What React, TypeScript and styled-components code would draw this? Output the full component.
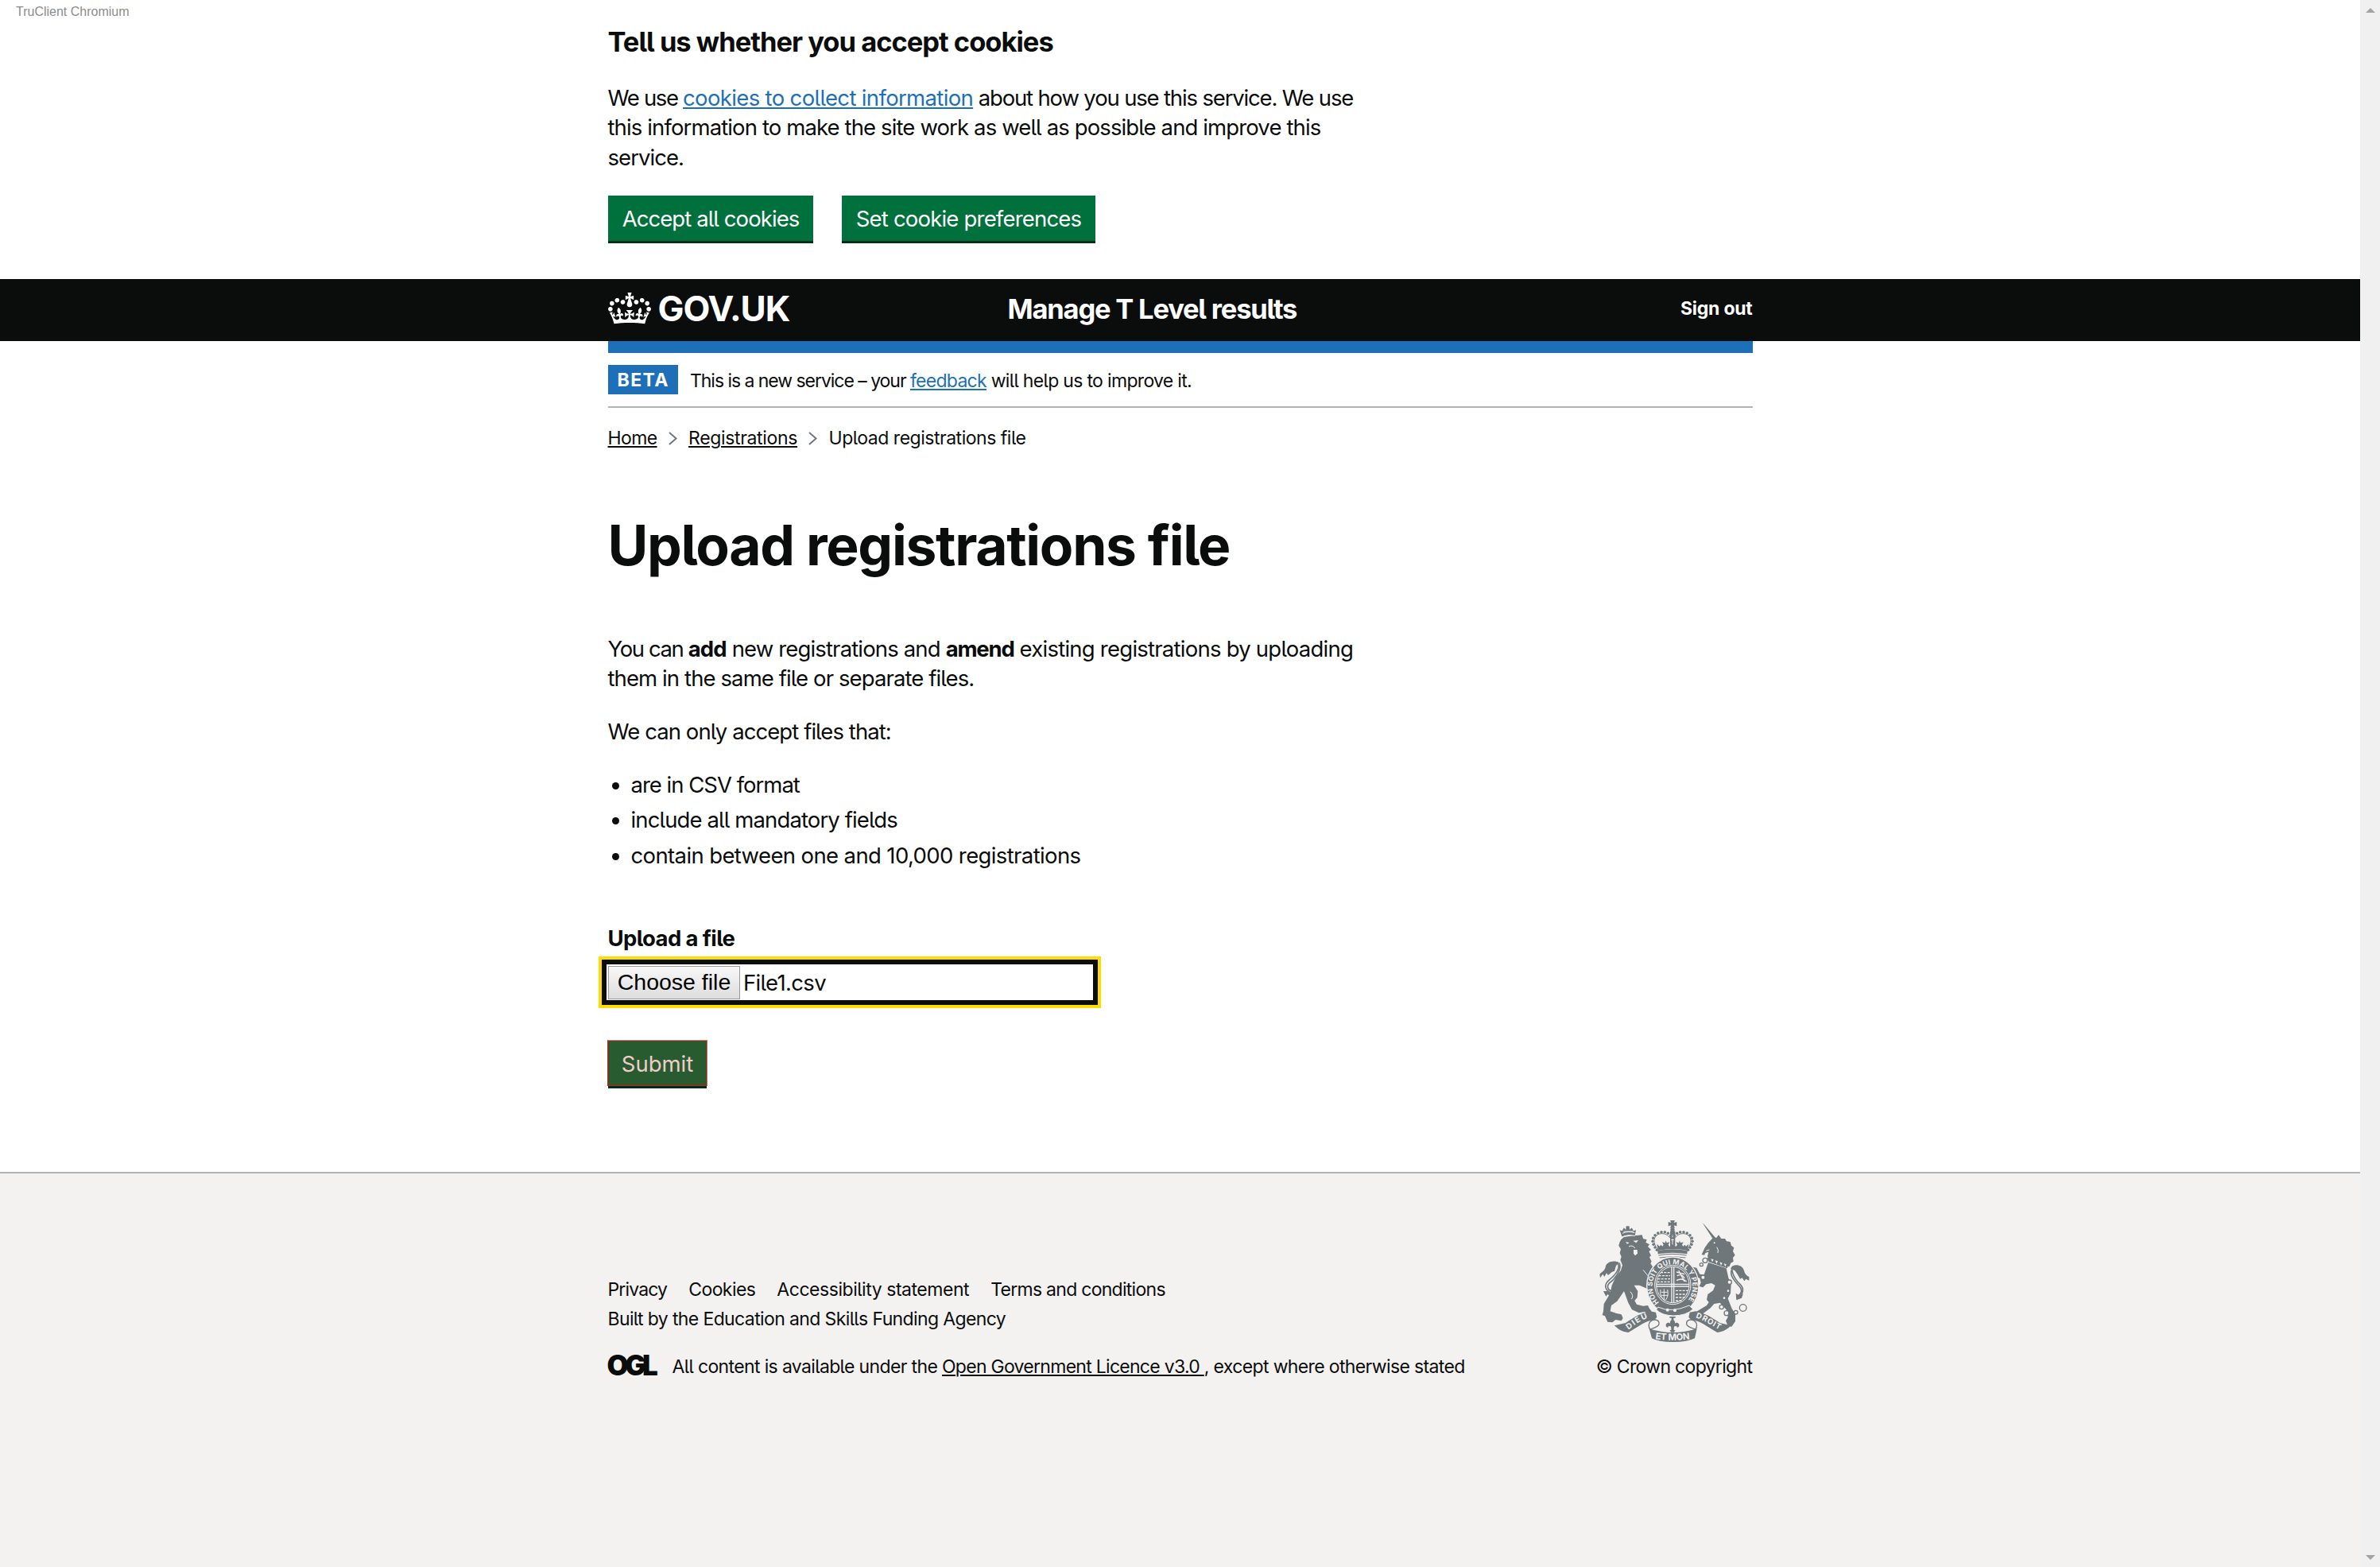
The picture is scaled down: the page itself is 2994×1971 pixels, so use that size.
import React from 'react';
import styled, { createGlobalStyle } from 'styled-components';

const ink = '#0b0c0c';
const blue = '#1d70b8';
const crestGrey = '#6f777b';
const footerGrey = '#f3f2f1';

const GlobalStyle = createGlobalStyle`
  * { box-sizing: border-box; }
  body {
    margin: 0;
    background: #fff;
    color: ${ink};
    font-family: Inter, "Liberation Sans", sans-serif;
    font-feature-settings: "cv05";
  }
  h1, h2, p, ul { margin: 0; padding: 0; font-weight: 400; }
  ul { list-style: none; }
`;

const Screen = styled.div`
  display: flex;
  width: 100%;
  height: 1971px;
  overflow: hidden;
`;

const Page = styled.div`
  flex: 1;
  display: flex;
  flex-direction: column;
  position: relative;
`;

const Scrollbar = styled.div`
  width: 25px;
  display: flex;
  flex-direction: column;
  justify-content: space-between;
  align-items: center;
  padding: 10px 0 9px;
  background: #f0f0f0;
`;

const BrowserLabel = styled.div`
  position: absolute;
  left: 20px;
  top: 6px;
  color: #8c8c8c;
  font: 16px/18px "Liberation Sans", Arial, sans-serif;
`;

const Container = styled.div`
  width: 1440px;
  margin: 0 auto;
`;

const Track = styled.span<{ $ls: number; $bold?: boolean }>`
  letter-spacing: ${(p) => p.$ls}px;
  font-weight: ${(p) => (p.$bold ? 700 : 'inherit')};
  white-space: pre;
`;

const Link = styled.a<{ $ls: number; $tone?: 'blue' | 'ink' }>`
  letter-spacing: ${(p) => p.$ls}px;
  color: ${(p) => (p.$tone === 'blue' ? blue : ink)};
  text-decoration: underline;
  text-decoration-thickness: 2px;
  text-underline-offset: 2px;
  white-space: pre;
`;

const Paragraph = styled.p`
  font-size: 27.5px;
  line-height: 37.5px;
  & + & { margin-top: 29px; }
`;

const CookieBanner = styled(Container)`
  padding: 30px 0 45px;
`;

const BannerTitle = styled.h2`
  margin-bottom: 29.5px;
  font-size: 34.5px;
  line-height: 45px;
  font-weight: 700;
  letter-spacing: -1px;
`;

const ButtonRow = styled.div`
  display: flex;
  gap: 36px;
  margin-top: 29px;
`;

const GreenButton = styled.button<{ $width: number; $ls: number }>`
  width: ${(p) => p.$width}px;
  height: 57px;
  margin-bottom: 3px;
  padding: 1px 0 0 1px;
  border: 0;
  background: #00703c;
  box-shadow: 0 3px 0 #002d18;
  color: #fff;
  font: inherit;
  font-feature-settings: inherit;
  font-size: 27.5px;
  letter-spacing: ${(p) => p.$ls}px;
`;

const Header = styled.header`
  background: ${ink};
  color: #fff;
  font-weight: 700;
`;

const HeaderRow = styled(Container)`
  display: flex;
  align-items: center;
  height: 78px;
  padding-bottom: 4px;
`;

const Logo = styled.div`
  display: flex;
  align-items: center;
  gap: 9px;
  width: 503px;
  font-size: 44px;
  letter-spacing: -1.1px;
`;

const ServiceName = styled.div`
  flex: 1;
  font-size: 34.5px;
  letter-spacing: -1.2px;
`;

const SignOut = styled.div`
  font-size: 23px;
  letter-spacing: -0.25px;
`;

const BlueBar = styled.div`
  height: 15px;
  background: ${blue};
`;

const PhaseBanner = styled.div`
  display: flex;
  align-items: center;
  gap: 15.5px;
  padding: 15px 0;
  border-bottom: 2px solid #b1b4b6;
  font-size: 23px;
`;

const Tag = styled.strong`
  width: 88px;
  height: 37px;
  padding-left: 12px;
  background: ${blue};
  color: #fff;
  font-weight: 700;
  line-height: 38px;
  letter-spacing: 1.45px;
`;

const PhaseText = styled.div`
  padding-top: 2px;
  line-height: 30px;
`;

const Breadcrumbs = styled.nav`
  display: flex;
  align-items: center;
  gap: 14.25px;
  margin-top: 23px;
  font-size: 23px;
  line-height: 30px;
`;

const Title = styled.h1`
  margin: 82.5px 0 74.25px;
  font-size: 69.5px;
  line-height: 75px;
  font-weight: 700;
  letter-spacing: -1.32px;
`;

const BulletList = styled.ul`
  display: flex;
  flex-direction: column;
  gap: 7px;
  margin-top: 29.5px;
`;

const Bullet = styled.li<{ $ls: number }>`
  display: flex;
  gap: 15px;
  padding-left: 5px;
  font-size: 27.5px;
  line-height: 37.5px;
  letter-spacing: ${(p) => p.$ls}px;
  &::before {
    content: '';
    width: 9px;
    height: 9px;
    margin-top: 15px;
    border-radius: 50%;
    background: ${ink};
  }
`;

const FieldLabel = styled.label`
  display: block;
  margin-top: 67px;
  font-size: 27.5px;
  line-height: 37.5px;
  font-weight: 700;
  letter-spacing: -0.62px;
`;

const FileField = styled.div`
  display: flex;
  align-items: center;
  gap: 4.5px;
  width: 624px;
  height: 57px;
  margin: 7.25px 0 44px -8px;
  padding: 2px;
  border: 6px solid ${ink};
  box-shadow: 0 0 0 4px #fd0;
  font-size: 27.5px;
  letter-spacing: -0.66px;
`;

const ChooseFile = styled.button`
  width: 166px;
  height: 42px;
  padding: 0 0 1px 1px;
  border: 1px solid #999;
  background: linear-gradient(#f8f8f8, #ddd);
  color: #000;
  font: 28.5px/39px "Liberation Sans", Arial, sans-serif;
`;

const SubmitButton = styled.button`
  display: block;
  width: 126px;
  height: 58px;
  margin-left: -1px;
  padding: 2px 0 0 1px;
  border: 1px solid;
  border-color: #ff6b6b #f05050 #e01212 #e01212;
  background: #285c30;
  box-shadow: 0 4px 0 -1px #002d18;
  color: #f2cccb;
  font: inherit;
  font-feature-settings: inherit;
  font-size: 27.5px;
  letter-spacing: 0;
`;

const Footer = styled.footer`
  flex: 1;
  margin-top: 108px;
  border-top: 2px solid #b1b4b6;
  background: ${footerGrey};
  font-size: 23px;
  line-height: 30px;
`;

const FooterRow = styled(Container)`
  display: flex;
  justify-content: space-between;
  align-items: flex-end;
  padding-top: 59px;
`;

const FooterLinks = styled.div`
  display: flex;
  gap: 27px;
`;

const BuiltBy = styled.p`
  margin: 7px 0 30px;
  letter-spacing: -0.62px;
`;

const Licence = styled.div`
  display: flex;
`;

const OglMark = styled.span`
  width: 82px;
  margin-left: -1px;
  font-size: 35px;
  font-weight: 900;
  letter-spacing: -4.5px;
  line-height: 27px;
`;

const CrownCopyright = styled.div`
  display: flex;
  flex-direction: column;
  align-items: center;
  gap: 16px;
  width: 197px;
  letter-spacing: -0.68px;
  white-space: nowrap;
`;

const Drawing = styled.svg`
  display: block;
  flex: none;
  overflow: visible;
`;

const Crown = () => (
  <Drawing width="54" height="39.7" viewBox="0 0 132 97">
    <path
      fill="#fff"
      fillRule="evenodd"
      d="M25 30.2c3.5 1.5 7.7-.2 9.1-3.7 1.5-3.6-.2-7.8-3.9-9.2-3.6-1.4-7.6.3-9.1 3.9-1.4 3.5.3 7.5 3.9 9zM9 39.5c3.6 1.5 7.8-.2 9.2-3.7 1.5-3.6-.2-7.8-3.9-9.1-3.6-1.5-7.6.2-9.1 3.8-1.4 3.5.3 7.5 3.8 9zM4.4 57.2c3.5 1.5 7.7-.2 9.1-3.8 1.5-3.6-.2-7.7-3.9-9.1-3.5-1.5-7.6.3-9.1 3.8-1.4 3.5.3 7.6 3.9 9.1zm38.3-21.4c3.5 1.5 7.7-.2 9.1-3.8 1.5-3.6-.2-7.7-3.9-9.1-3.6-1.5-7.6.3-9.1 3.8-1.3 3.6.4 7.7 3.9 9.1zm64.4-5.6c-3.6 1.5-7.8-.2-9.1-3.7-1.5-3.6.2-7.8 3.8-9.2 3.6-1.4 7.7.3 9.2 3.9 1.3 3.5-.4 7.5-3.9 9zm15.9 9.3c-3.6 1.5-7.7-.2-9.1-3.7-1.5-3.6.2-7.8 3.7-9.1 3.6-1.5 7.7.2 9.2 3.8 1.5 3.5-.3 7.5-3.8 9zm4.7 17.7c-3.6 1.5-7.8-.2-9.2-3.8-1.5-3.6.2-7.7 3.9-9.1 3.6-1.5 7.7.3 9.2 3.8 1.3 3.5-.4 7.6-3.9 9.1zM89.3 35.8c-3.6 1.5-7.8-.2-9.2-3.8-1.4-3.6.2-7.7 3.9-9.1 3.6-1.5 7.7.3 9.2 3.8 1.4 3.6-.3 7.7-3.9 9.1zM69.7 17.7l8.9 4.7V9.3l-8.9 2.8c-.2-.3-.5-.6-.9-.9L72.4 0H59.6l3.5 11.2c-.3.3-.6.5-.9.9l-8.8-2.8v13.1l8.8-4.7c.3.3.6.7.9.9l-5 15.4v.1c-.2.8-.4 1.6-.4 2.4 0 4.1 3.1 7.5 7 8.1h.2c.3 0 .7.1 1 .1.4 0 .7 0 1-.1h.2c4-.6 7.1-4.1 7.1-8.1 0-.8-.1-1.7-.4-2.4V34l-5.1-15.4c.4-.2.7-.6 1-.9zM66 92.8c16.9 0 32.8 1.1 47.1 3.2 4-16.9 8.9-26.7 14-33.5l-9.6-3.4c1 4.9 1.1 7.2 0 10.2-1.5-1.4-3-4.3-4.2-8.7L108.6 76c2.8-2 5-3.2 7.5-3.3-4.4 9.4-10 11.9-13.6 11.2-4.3-.8-6.3-4.6-5.6-7.9 1-4.7 5.7-5.9 8-.5 4.3-8.7-3-11.4-7.6-8.8 7.1-7.2 7.9-13.5 2.1-21.1-8 6.1-8.1 12.3-4.5 20.8-4.7-5.4-12.1-2.5-9.5 6.2 3.4-5.2 7.9-2 7.2 3.1-.6 4.3-6.4 7.8-13.5 7.2-10.3-.9-10.9-8-11.2-13.8 2.5-.5 7.1 1.8 11 7.3L80.2 60c-4.1 4.4-8 5.3-12.3 5.4 1.4-4.4 8-11.6 8-11.6H55.5s6.4 7.2 7.9 11.6c-4.2-.1-8-1-12.3-5.4l1.4 16.4c3.9-5.5 8.5-7.7 10.9-7.3-.3 5.8-.9 12.8-11.1 13.8-7.2.6-12.9-2.9-13.5-7.2-.7-5 3.8-8.3 7.1-3.1 2.7-8.7-4.6-11.6-9.4-6.2 3.7-8.5 3.6-14.7-4.6-20.8-5.8 7.6-5 13.9 2.2 21.1-4.7-2.6-11.9.1-7.7 8.8 2.3-5.5 7.1-4.2 8.1.5.7 3.3-1.3 7.1-5.7 7.9-3.5.7-9-1.8-13.5-11.2 2.5.1 4.7 1.3 7.5 3.3l-4.7-15.4c-1.2 4.4-2.7 7.2-4.3 8.7-1.1-3-.9-5.3 0-10.2l-9.5 3.4c5 6.9 9.9 16.7 14 33.5 14.8-2.1 30.8-3.2 47.7-3.2z"
    />
  </Drawing>
);

const Chevron = () => (
  <Drawing width="11" height="17" viewBox="0 0 11 17">
    <path d="M1 1l8.5 7.5L1 16" fill="none" stroke="#6f777b" strokeWidth="2" />
  </Drawing>
);

const Arrow = ({ down }: { down?: boolean }) => (
  <Drawing width="12" height="6" viewBox="0 0 12 6">
    <path d={down ? 'M0 0h12L6 6z' : 'M0 6h12L6 0z'} fill="#a3a3a3" />
  </Drawing>
);

const beads = [
  [366, 133], [356, 124], [344, 119], [331, 119], [318, 123], [307, 131],
  [300, 142], [298, 154], [301, 166], [307, 177], [314, 187],
];

const Crest = () => (
  <Drawing width="188" height="153" viewBox="97 75 564 459">
    <defs>
      <path id="garter" d="M322 385 A76 83 0 1 1 432 376" />
      <path id="ribbonLeft" d="M206 488 C232 470 250 452 284 442" />
      <path id="ribbonRight" d="M460 442 C492 450 520 474 556 490" />
      <path id="ribbonMid" d="M304 522 Q374 532 444 522" />
    </defs>
    {/* crown */}
    <path fill={crestGrey} d="M364 75h18l-4 9 11-3v16l-11-3 4 10h-18l4-10-11 3v-16l11 3z" />
    <circle cx="373" cy="111" r="8" fill={crestGrey} />
    <rect x="364" y="116" width="19" height="66" fill={crestGrey} />
    <path stroke={footerGrey} strokeWidth="3" fill="none" d="M373 130v9M373 145v22M368 148h10" />
    {beads.map(([x, y]) => (
      <g key={x} fill={crestGrey}>
        <circle cx={x} cy={y} r="5.2" />
        <circle cx={746 - x} cy={y} r="5.2" />
      </g>
    ))}
    <path fill="none" stroke={crestGrey} strokeWidth="3" d="M364 142c-8-12-20-18-34-17-18 2-28 16-26 32 2 12 8 22 14 30M382 142c8-12 20-18 34-17 18 2 28 16 26 32-2 12-8 22-14 30" />
    <path fill={crestGrey} d="M318 189l-4-25 10 9 5-6 6 6 4-6-5-10 11 3 3-9 3 9 11-3-5 10 6 8 6-8h10l6 8 6-8-5-10 11 3 3-9 3 9 11-3-5 10 4 6 6-6 5 6 10-9-4 25q-55-12-110 0z" />
    <path fill={crestGrey} d="M317 190q56-13 112 0l-1 12q-55-10-110 0z" />
    <path fill="none" stroke={crestGrey} strokeWidth="3" d="M320 207q53-10 106 0M324 216q50-9 98 0" />
    {/* lion */}
    <path fill={crestGrey} d="M180 146l10-8 24-4 44-4 4 14 14 4-4 10 14 8-6 8 12 12-8 6 8 16-6 6 8 16-4 8 8 12-12 20-8 30 12 6 12 40-8 14-14-26-32-14-20 0 14 22-2 24-10 12 8 14 24 6 18-2 6 12 8 10-8 8-20-6-20 4-26-12-14-26-8-22-8-22-8 12-18 26-22 16-4 22 24 8 18 4 6 14-6 10-22-4-12 10-18-2-10-22-10-4 4-14 2-28 24-40 6-30 14-30 20-26 6-20-8-20 4-12-6-14 4-14-8-14 4-14z" />
    <path fill={crestGrey} d="M182 136l-8-24 9 3 6-12 8 7 1-13h12l1 13 8-7 7 12 9-4-4 24q-25-8-49 1z" />
    <path fill="none" stroke={footerGrey} strokeWidth="3" d="M184 124q22-10 46-2M190 134q20-6 42-1M188 117h38" />
    <path fill={footerGrey} d="M196 156l14 3-8 5zM224 152l20-2-8 10zM226 186h14l1 14-9 8-6-8z" />
    <path fill="none" stroke={footerGrey} strokeWidth="3" d="M208 174q12-8 24 6M262 262l30 36M214 344q14 16 4 28" />
    <path fill="none" stroke={crestGrey} strokeWidth="5" d="M162 232c18 14 2 44-26 66-26 20-16 44 6 50M172 236c12 24-18 62-38 76-12 14-2 30 10 28l26-22" />
    <path fill={crestGrey} d="M172 234c-22-10-50-2-52 18-4 14-12 16-22 26l2 14 10-14 6 10 8-14 6 8 14-12 10-4 6-20zM112 342l10 20 6-8 10 8 4-14-14-6z" />
    {/* unicorn */}
    <path fill={crestGrey} d="M486 84l8 8 44 52-8 8z" />
    <path fill={crestGrey} d="M495 178l14-20 16-16 14-2 8-10 10 14 14 0 6 10 14 2 4 14 10 8-4 14 8 14-8 10 2 14-10 6-6 14-10-2-60-22-12-16 4-16-12 4-4 8-10-2z" />
    <circle cx="531" cy="160" r="3" fill={footerGrey} />
    <path fill="none" stroke={footerGrey} strokeWidth="3" d="M500 190l12-4M540 176q8 10 4 22" />
    <path fill={crestGrey} d="M512 206l10 18 60 22-2 10-70-24-6-14z" />
    <path fill={footerGrey} d="M518 220l10 3-5 9zM534 226l10 3-5 10zM551 232l10 4-5 9zM567 238l9 3-4 9z" />
    <path fill={crestGrey} d="M508 234l68 22 8 36 10 24-2 34-10 20 14 36 14 24 0 26-14 20-14-2-8-20 8-14-6-28-24-26-22 4-14 16-32 24-26 6-8-4 16-14 36-22 8-12-8-10 4-20 20-14 8-20-14-8-20 4-12 12-14-4 6-14-4-16-26-14-2-14-12 6-6-10 14-12 20 4 12 24 16 2z" />
    <g fill={footerGrey} stroke={crestGrey} strokeWidth="4">
      <circle cx="588" cy="308" r="8" />
      <circle cx="583" cy="341" r="6" />
      <circle cx="568" cy="368" r="6" />
      <circle cx="558" cy="402" r="8" />
      <circle cx="577" cy="425" r="9" />
      <circle cx="612" cy="422" r="7" />
      <circle cx="639" cy="405" r="13" />
      <circle cx="496" cy="226" r="9" />
      <circle cx="482" cy="242" r="6" />
      <circle cx="488" cy="290" r="8" />
    </g>
    <path fill="none" stroke={crestGrey} strokeWidth="5" d="M596 262c-8 20 10 40 26 58 16 16 14 30-4 42M606 248c-20 4-2 46 22 68 18 18 12 40-14 50" />
    <path fill={crestGrey} d="M592 258c8-22 44-16 50 4 4 16 10 22 20 26v14l-12-6-6 8-8-12-8 4-10-18-10-14zM612 350l16 10 12-10-6 18-20 8z" />
    {/* garter and shield */}
    <ellipse cx="374" cy="322" rx="98" ry="109" fill={crestGrey} stroke={footerGrey} strokeWidth="4" />
    <ellipse cx="374" cy="318" rx="68" ry="74" fill="none" stroke={footerGrey} strokeWidth="3" />
    <ellipse cx="374" cy="318" rx="62" ry="68" fill="none" stroke={footerGrey} strokeWidth="3" />
    <path stroke={footerGrey} strokeWidth="4" fill="none" d="M370 252v132M378 252v132M312 316h124M312 324h124" />
    <path stroke={footerGrey} strokeWidth="4" fill="none" strokeDasharray="9 4" d="M328 272h36M321 284h43M317 296h47M315 307h49M385 378h26M385 366h34M385 354h42M385 340h46" />
    <path stroke={footerGrey} strokeWidth="4" fill="none" d="M388 270l30 8M390 284q20-10 28 10M388 302q20-12 38 4M396 264l22 42" />
    <path stroke={footerGrey} strokeWidth="3" fill="none" d="M328 336c-4 18 4 32 14 40M354 336c4 18 0 32-8 40M341 334v42M330 346h24M332 358h24" />
    <text fill={footerGrey} fontWeight="700" fontSize="26">
      <textPath href="#garter" textLength="372">HON SOIT QUI MAL Y PENSE</textPath>
    </text>
    <path fill={crestGrey} stroke={footerGrey} strokeWidth="3" d="M318 402q50 24 118-6l14 14q-24 24-74 25-46-2-64-23z" />
    <circle cx="354" cy="413" r="6" fill={footerGrey} />
    <circle cx="382" cy="415" r="6" fill={footerGrey} />
    {/* ribbons */}
    <path fill={crestGrey} d="M154 472l42-10c34-22 54-36 92-44l22 4 4 18-10 12c-28-2-58 22-98 46-24-2-40-14-52-26z" />
    <path fill={crestGrey} d="M594 472l-42-10c-34-22-54-36-92-44l-22 4-4 18 10 12c28-2 58 22 98 46 24-2 40-14 52-26z" />
    <path fill={footerGrey} stroke={crestGrey} strokeWidth="4" d="M288 458c14-14 36-8 34 8-2 12-18 14-34 20-6-8-6-22 0-28zM460 458c-14-14-36-8-34 8 2 12 18 14 34 20 6-8 6-22 0-28z" />
    <path fill={crestGrey} d="M285 484q88 28 180 0l-8 36q-26 14-82 14t-80-14z" />
    <path fill={crestGrey} d="M362 438h22v5h-7v8q9 8 3 16c3-8 18-8 18 4q0 8-8 8 1-8-10-4l-2 6v8h6l-6 8h-10l-6-8h6v-8l-2-6q-11-4-10 4-8 0-8-8c0-12 15-12 18-4q-6-8 3-16v-8h-7z" />
    <g fill={footerGrey} fontWeight="700">
      <text fontSize="30"><textPath href="#ribbonLeft" textLength="86">DIEU</textPath></text>
      <text fontSize="29"><textPath href="#ribbonRight" textLength="100">DROIT</textPath></text>
      <text fontSize="34"><textPath href="#ribbonMid" startOffset="4" textLength="130">ET MON</textPath></text>
    </g>
  </Drawing>
);

export default function App() {
  return (
    <Screen>
      <GlobalStyle />
      <Page>
        <BrowserLabel>TruClient Chromium</BrowserLabel>

        <CookieBanner>
          <BannerTitle>Tell us whether you accept cookies</BannerTitle>
          <Paragraph>
            <Track $ls={-1.35}>{'We use '}</Track>
            <Link $ls={-0.65} $tone="blue">cookies to collect information</Link>
            <Track $ls={-1.16}>{' about how you use this service. We use'}</Track>
            <br />
            <Track $ls={-0.88}>this information to make the site work as well as possible and improve this</Track>
            <br />
            <Track $ls={-0.94}>service.</Track>
          </Paragraph>
          <ButtonRow>
            <GreenButton $width={258} $ls={-0.92}>Accept all cookies</GreenButton>
            <GreenButton $width={319} $ls={-0.8}>Set cookie preferences</GreenButton>
          </ButtonRow>
        </CookieBanner>

        <Header>
          <HeaderRow>
            <Logo><Crown />GOV.UK</Logo>
            <ServiceName>Manage T Level results</ServiceName>
            <SignOut>Sign out</SignOut>
          </HeaderRow>
        </Header>

        <Container>
          <BlueBar />
          <PhaseBanner>
            <Tag>BETA</Tag>
            <PhaseText>
              <Track $ls={-1.04}>{'This is a new service – your '}</Track>
              <Link $ls={-0.72} $tone="blue">feedback</Link>
              <Track $ls={-0.68}>{' will help us to improve it.'}</Track>
            </PhaseText>
          </PhaseBanner>

          <Breadcrumbs>
            <Link $ls={-0.6}>Home</Link>
            <Chevron />
            <Link $ls={-0.34}>Registrations</Link>
            <Chevron />
            <Track $ls={-0.48}>Upload registrations file</Track>
          </Breadcrumbs>

          <Title>Upload registrations file</Title>

          <Paragraph>
            <Track $ls={-1.4}>{'You can '}</Track>
            <Track $ls={-0.88} $bold>add</Track>
            <Track $ls={-0.85}>{' new registrations and '}</Track>
            <Track $ls={-1.18} $bold>amend</Track>
            <Track $ls={-0.76}>{' existing registrations by uploading'}</Track>
            <br />
            <Track $ls={-0.9}>them in the same file or separate files.</Track>
          </Paragraph>
          <Paragraph>
            <Track $ls={-0.93}>We can only accept files that:</Track>
          </Paragraph>
          <BulletList>
            <Bullet $ls={-1}>are in CSV format</Bullet>
            <Bullet $ls={-0.88}>include all mandatory fields</Bullet>
            <Bullet $ls={-0.62}>contain between one and 10,000 registrations</Bullet>
          </BulletList>

          <FieldLabel>Upload a file</FieldLabel>
          <FileField>
            <ChooseFile>Choose file</ChooseFile>
            <span>File1.csv</span>
          </FileField>
          <SubmitButton>Submit</SubmitButton>
        </Container>

        <Footer>
          <FooterRow>
            <div>
              <FooterLinks>
                <Track $ls={-0.85}>Privacy</Track>
                <Track $ls={-0.57}>Cookies</Track>
                <Track $ls={-0.46}>Accessibility statement</Track>
                <Track $ls={-0.72}>Terms and conditions</Track>
              </FooterLinks>
              <BuiltBy>Built by the Education and Skills Funding Agency</BuiltBy>
              <Licence>
                <OglMark>OGL</OglMark>
                <div>
                  <Track $ls={-0.64}>{'All content is available under the '}</Track>
                  <Link $ls={-0.72}>{'Open Government Licence v3.0 '}</Link>
                  <Track $ls={-0.64}>, except where otherwise stated</Track>
                </div>
              </Licence>
            </div>
            <CrownCopyright>
              <Crest />
              © Crown copyright
            </CrownCopyright>
          </FooterRow>
        </Footer>
      </Page>
      <Scrollbar>
        <Arrow />
        <Arrow down />
      </Scrollbar>
    </Screen>
  );
}
